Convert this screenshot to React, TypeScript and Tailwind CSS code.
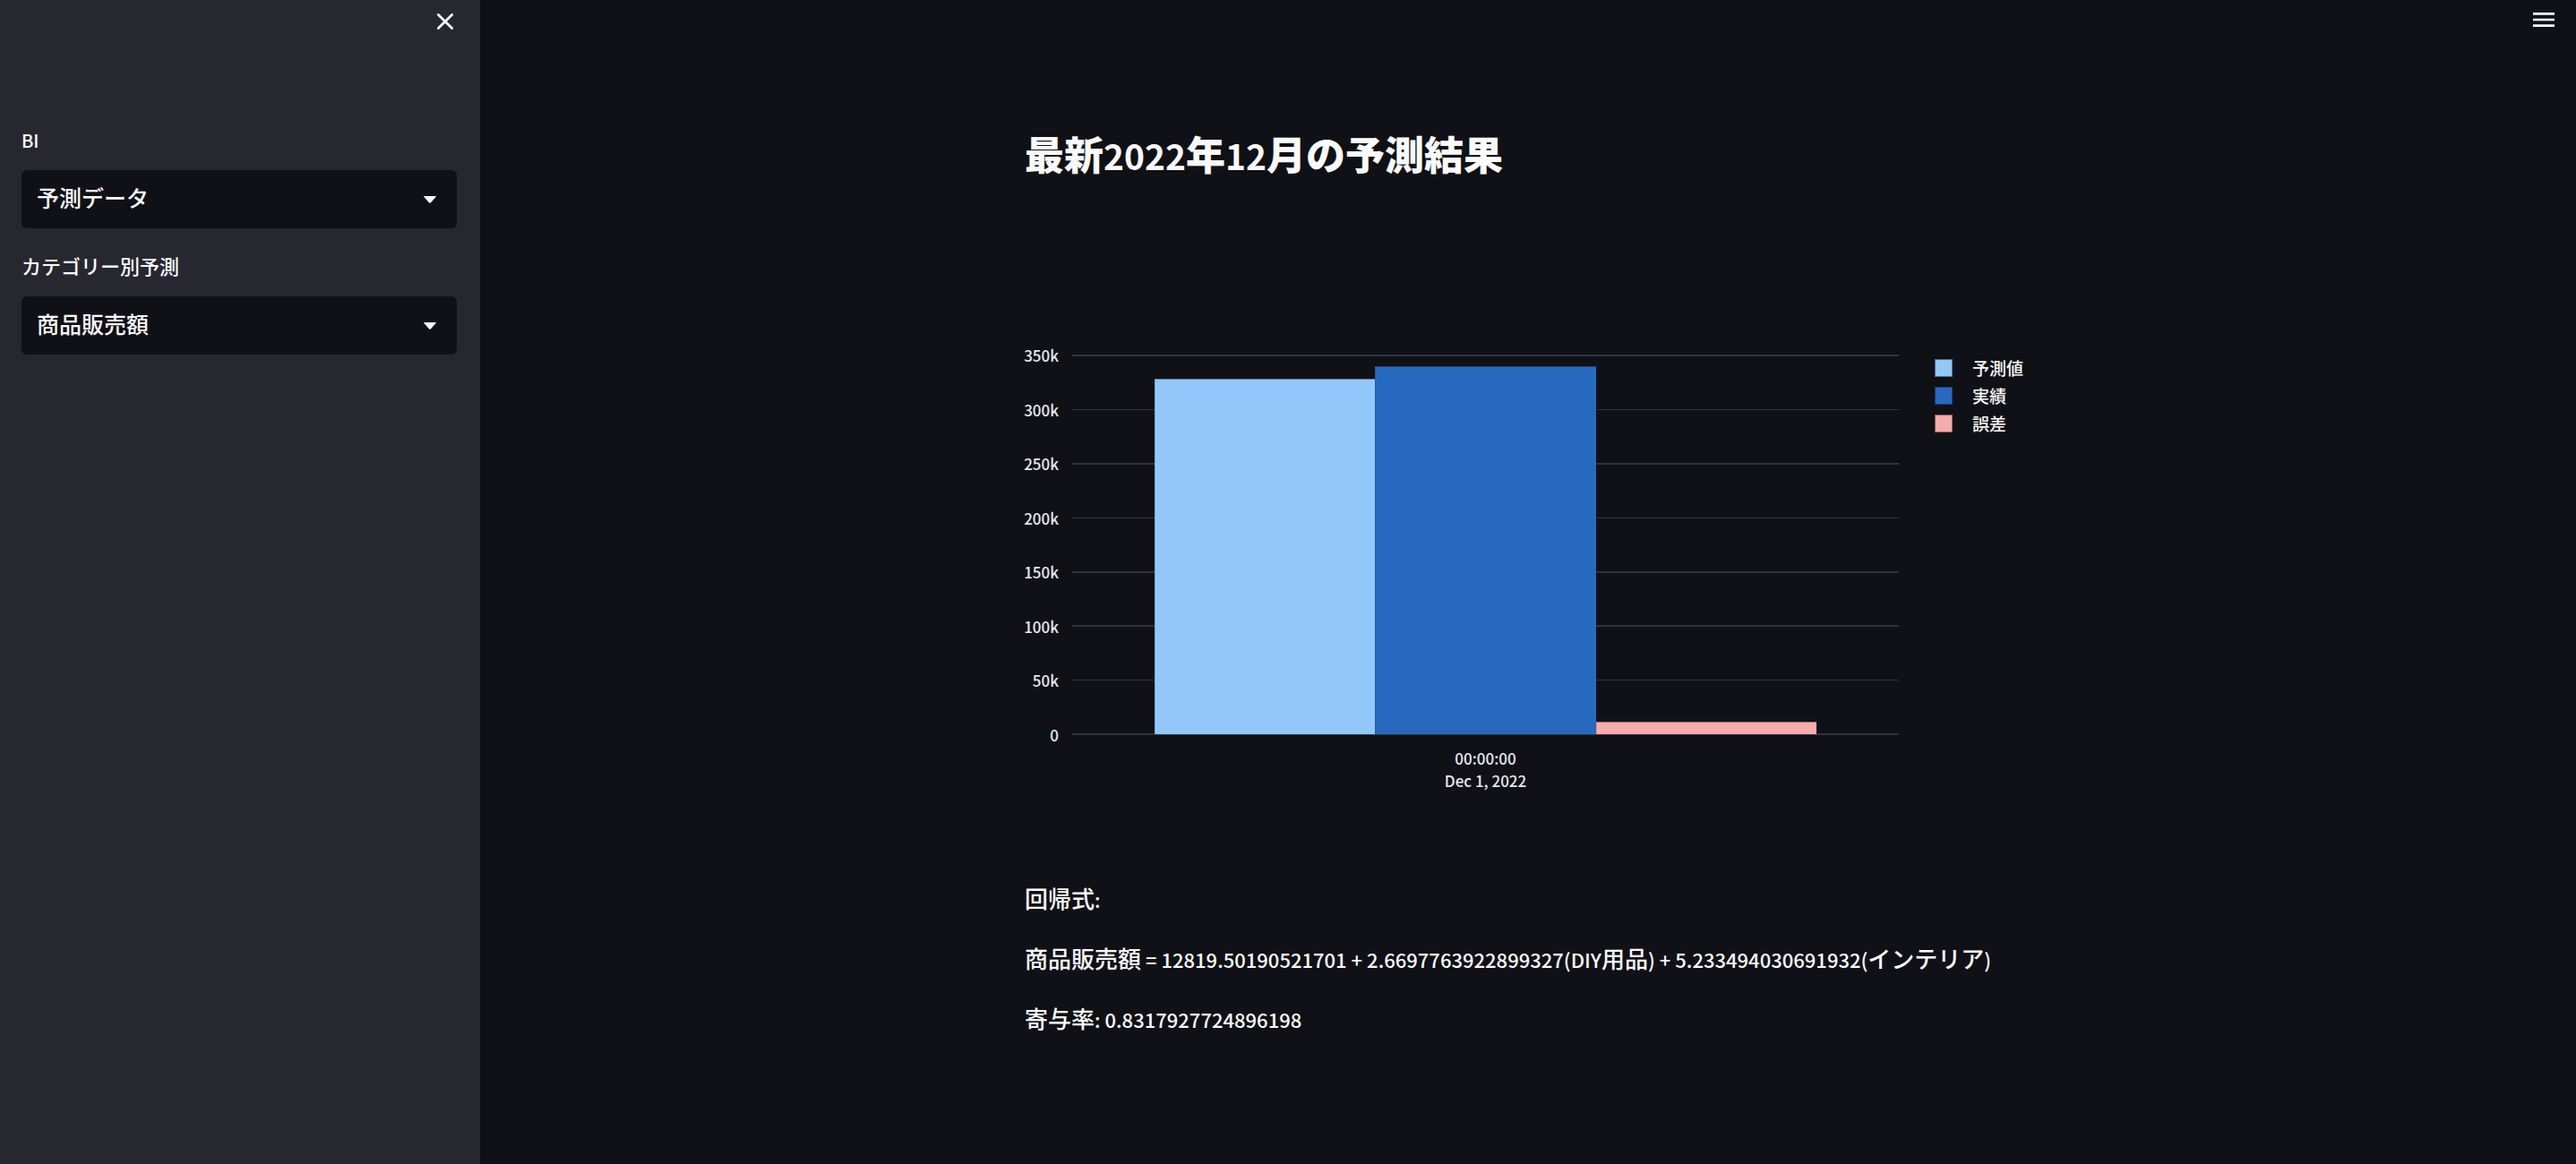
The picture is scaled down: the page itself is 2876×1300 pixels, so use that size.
import { useId, useState } from "react";

type Series = { name: string; value: number; color: string };

const SERIES: Series[] = [
  { name: "予測値", value: 328500, color: "bg-[#93c7fa]" },
  { name: "実績", value: 339700, color: "bg-[#2869c0]" },
  { name: "誤差", value: 11600, color: "bg-[#f4adab]" },
];

const MAX_VALUE = 350000;

const TICKS = [
  { label: "350k", line: "h-0.5" },
  { label: "300k", line: "h-px" },
  { label: "250k", line: "h-0.5" },
  { label: "200k", line: "h-px" },
  { label: "150k", line: "h-0.5" },
  { label: "100k", line: "h-0.5" },
  { label: "50k", line: "h-px" },
  { label: "0", line: "h-0.5" },
];

/* Sets Latin runs slightly smaller than the Japanese text around them. */
function Mixed({ text, latin }: { text: string; latin: string }) {
  const parts = text.split(/([\x20-\x7e]+)/).filter(Boolean);
  return (
    <>
      {parts.map((part, i) =>
        /^[\x20-\x7e]+$/.test(part) ? (
          <span key={i} className={`leading-none ${latin}`}>
            {part}
          </span>
        ) : (
          part
        ),
      )}
    </>
  );
}

function SelectField({ label, options }: { label: string; options: string[] }) {
  const id = useId();
  const [value, setValue] = useState(options[0]);
  return (
    <div className="flex flex-col gap-[17px]">
      <label htmlFor={id} className="text-[22px] leading-9">
        <Mixed text={label} latin="text-[20px]" />
      </label>
      <div className="grid items-center">
        <select
          id={id}
          value={value}
          onChange={(e) => setValue(e.target.value)}
          className="col-start-1 row-start-1 h-[65px] w-full appearance-none rounded-md bg-[#101116] pr-14 pb-1 pl-[17px] text-[25px] outline-none"
        >
          {options.map((o) => (
            <option key={o}>{o}</option>
          ))}
        </select>
        <svg
          viewBox="0 0 14 8"
          className="pointer-events-none col-start-1 row-start-1 mr-[23px] h-2 w-3.5 justify-self-end"
          fill="currentColor"
          aria-hidden="true"
        >
          <path d="M0.6 0H13.4Q14.3 0.3 13.6 1L8 7.3Q7 8.3 6 7.3L0.4 1Q-0.3 0.3 0.6 0Z" />
        </svg>
      </div>
    </div>
  );
}

function Sidebar() {
  return (
    <aside className="w-[536px] shrink-0 bg-[#272730] px-6">
      <div className="flex h-12 items-center justify-end">
        <button type="button" aria-label="Close sidebar" className="p-1.5">
          <svg viewBox="0 0 18 18" className="size-[18px]" stroke="currentColor" strokeWidth="2.8" strokeLinecap="round">
            <path d="M1.4 1.4L16.6 16.6M16.6 1.4L1.4 16.6" />
          </svg>
        </button>
      </div>
      <div className="mt-[89px] flex flex-col gap-[23px] pr-0.5">
        <SelectField label="BI" options={["予測データ"]} />
        <SelectField label="カテゴリー別予測" options={["商品販売額"]} />
      </div>
    </aside>
  );
}

function Chart() {
  return (
    <section className="flex items-start" aria-label="予測値と実績">
      <div className="-mt-[9px] flex h-[444px] w-[38px] flex-col items-end justify-between text-[17px] leading-5 text-[#e6e8f0]">
        {TICKS.map((t) => (
          <span key={t.label}>{t.label}</span>
        ))}
      </div>
      <div className="ml-[15px] flex-1">
        <div className="grid h-[425px]">
          <div className="col-start-1 row-start-1 flex flex-col justify-between">
            {TICKS.map((t) => (
              <div key={t.label} className="flex h-0.5 items-center">
                <div className={`w-full bg-[#31323e] ${t.line}`} />
              </div>
            ))}
          </div>
          <div className="col-start-1 row-start-1 my-px flex items-end px-[10%]">
            {SERIES.map((s) => (
              <div
                key={s.name}
                className={`flex-1 border-t border-l border-t-[#101116]/40 border-l-[#101116]/15 ${s.color}`}
                style={{ height: `${(s.value / MAX_VALUE) * 100}%` }}
              />
            ))}
          </div>
        </div>
        <p className="mt-[13px] text-center text-[17px] leading-[25px] text-[#e6e8f0]">
          00:00:00
          <br />
          Dec 1, 2022
        </p>
      </div>
      <ul className="mt-[5px] ml-10 flex w-[108px] flex-col gap-[11px] text-[19px] leading-5">
        {SERIES.map((s) => (
          <li key={s.name} className="flex items-center gap-[22px]">
            <span className={`size-5 border border-[#101116]/50 ${s.color}`} />
            {s.name}
          </li>
        ))}
      </ul>
    </section>
  );
}

export default function App() {
  return (
    <div
      lang="ja"
      className="flex min-h-screen bg-[#101116] font-['Noto_Sans_CJK_JP',sans-serif] font-medium text-[#fafafa]"
    >
      <Sidebar />
      <div className="flex-1">
        <header className="flex h-11 items-center justify-end pr-5">
          <button type="button" aria-label="Menu" className="p-1">
            <svg viewBox="0 0 24 16" className="h-4 w-6" fill="currentColor">
              <path d="M0 0H24V2.7H0ZM0 6.7H24V9.3H0ZM0 13.3H24V16H0Z" />
            </svg>
          </button>
        </header>
        <main className="mx-auto max-w-[1124px]">
          <h1 className="mt-[100px] text-[44px] leading-[54px] font-black">
            <Mixed text="最新2022年12月の予測結果" latin="text-[39px] font-bold" />
          </h1>
          <div className="mt-[198px]">
            <Chart />
          </div>
          <div className="mt-[98px] flex flex-col gap-[26px] text-[26px] leading-[41px]">
            {[
              "回帰式:",
              "商品販売額 = 12819.50190521701 + 2.6697763922899327(DIY用品) + 5.233494030691932(インテリア)",
              "寄与率: 0.8317927724896198",
            ].map((t) => (
              <p key={t}>
                <Mixed text={t} latin="text-[22px]" />
              </p>
            ))}
          </div>
        </main>
      </div>
    </div>
  );
}
